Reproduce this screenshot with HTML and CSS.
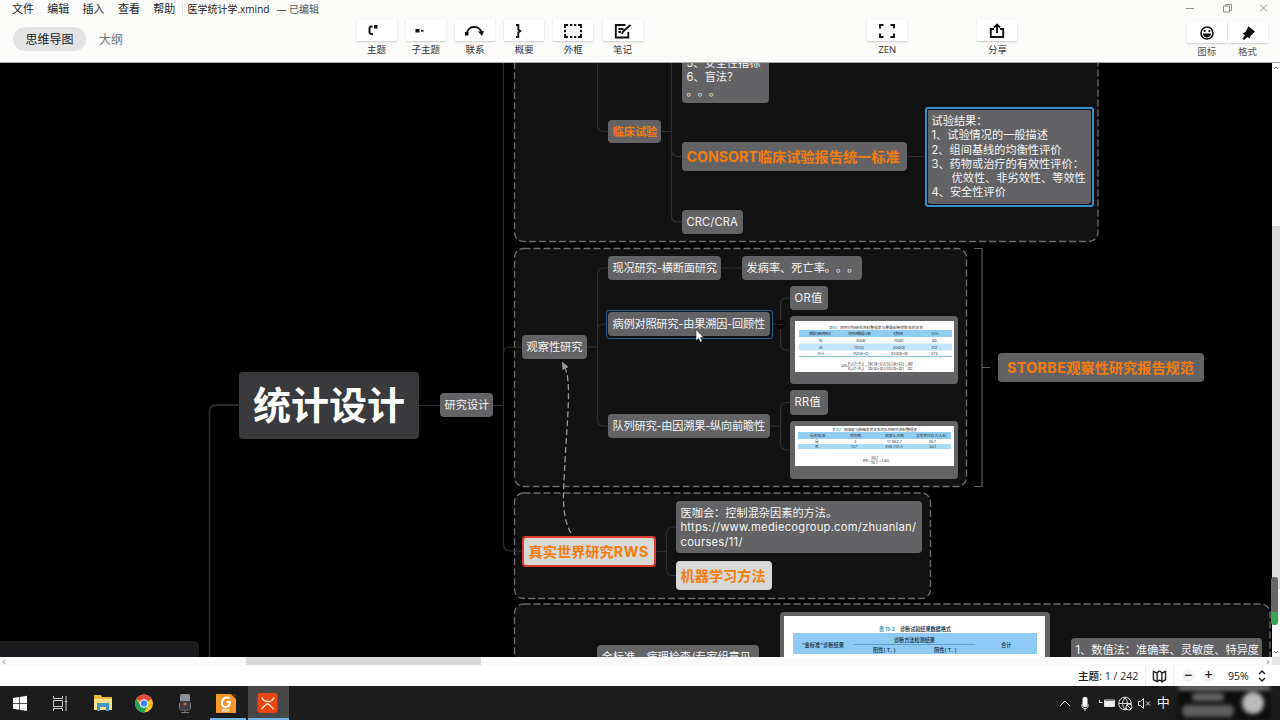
FILE: index.html
```html
<!DOCTYPE html>
<html lang="zh-CN">
<head>
<meta charset="utf-8">
<title>医学统计学.xmind</title>
<link rel="stylesheet" href="styles.css">
</head>
<body>
<div class="app">
  <header class="header">
    <div class="left">
      <nav class="menu"><span>文件</span><span>编辑</span><span>插入</span><span>查看</span><span>帮助</span><span class="doc">医学统计学.xmind</span><span class="saved">— 已编辑</span></nav>
      <div class="tabs"><span class="tab active">思维导图</span><span class="tab">大纲</span></div>
    </div>
    <div class="tools">
      <div class="tool"><div class="btn"><svg viewBox="0 0 40 22"><path d="M15.500 6.500h-1q-2 0-2 2v3.500q0 2 2 2H16" class="s2"/><rect x="17" y="5" width="3.500" height="3.500"/></svg></div><label>主题</label></div>
      <div class="tool"><div class="btn"><svg viewBox="0 0 40 22"><rect x="9.500" y="9" width="4" height="3.500"/><rect x="15" y="10" width="2.500" height="1.600"/></svg></div><label>子主题</label></div>
      <div class="tool"><div class="btn"><svg viewBox="0 0 40 22"><path d="M12 14C12 5 25 5 26.500 12.500" class="s2"/><path d="M23 11.500l6-.5-2 5z"/><rect x="10" y="12" width="3.500" height="3.500"/></svg></div><label>联系</label></div>
      <div class="tool"><div class="btn"><svg viewBox="0 0 40 22"><path d="M12 5h2.300v4.500l2 1.500-2 1.500V17H12" class="s2"/></svg></div><label>概要</label></div>
      <div class="tool"><div class="btn"><svg viewBox="0 0 40 22"><path d="M12 8V5h3M25 5h3v3M28 14v3h-3M15 17h-3v-3M17 5h2.300M21 5h2.300M17 17h2.300M21 17h2.300M12 9.800v2.500M28 9.800v2.500" class="s2"/></svg></div><label>外框</label></div>
      <div class="tool"><div class="btn"><svg viewBox="0 0 40 22"><path d="M22.500 5H12.800v12.500h12.500V12M15.500 9h5M15.500 12h2.500M19 14l1-2.500 7.500-6.500" class="s2"/></svg></div><label>笔记</label></div>
      <div class="tool zen"><div class="btn"><svg viewBox="0 0 40 22"><path d="M13 8.500V5h3.500M23.500 5H27v3.500M27 13.500V17h-3.500M16.500 17H13v-3.500" class="s2"/></svg></div><label>ZEN</label></div>
      <div class="tool share"><div class="btn"><svg viewBox="0 0 40 22"><path d="M17 9h-3.200v8h12.400V9H23M20 13V5M17 7.500l3-3 3 3" class="s2"/></svg></div><label>分享</label></div>
    </div>
    <div class="right">
      <svg class="winctl" viewBox="0 0 100 20"><path d="M6 8.500h8M43.500 6h6v6h-6zM45.500 6V4.500h6v6h-2M80 4.500l7 7M87 4.500l-7 7"/></svg>
      <div class="pair">
        <div class="ptool"><div class="btn"><svg viewBox="0 0 40 22"><circle cx="20" cy="11" r="6" class="s15"/><rect x="16.800" y="8" width="1.800" height="2"/><rect x="21.500" y="8" width="1.800" height="2"/><path d="M16 11.500h8q-.5 4-4 4t-4-4"/></svg></div><label>图标</label></div>
        <div class="ptool"><div class="btn"><svg viewBox="0 0 40 22"><path d="M20.500 4.200l6.500 5.300-4.500 4.500-1 2.500-2-1.500-3.500 3-1.500-1.500 2.500-3-2.500-2 3-1.500z"/></svg></div><label>格式</label></div>
      </div>
    </div>
  </header>

  <main class="stage">
    <div class="canvas">
      <div class="board">
        <svg class="links" viewBox="0 0 1272 660">
          <g class="bound">
            <rect x="514.500" y="20" width="583.500" height="221.500" rx="9"/>
            <rect x="514.500" y="248.500" width="452" height="238" rx="9"/>
            <rect x="514.500" y="493" width="416" height="105.500" rx="9"/>
            <rect x="514.500" y="604" width="755.500" height="90" rx="9"/>
          </g>
          <g class="line">
            <path d="M209.500 660V412q0-7 7-7H239" class="thick"/>
            <path d="M419 405.500h21M493 405.500h10.500M503.500 60V544q0 7 7 7H522M503.500 353q0-6 6-6H522"/>
            <path d="M587 347h10.500M597.500 60V125q0 6.500 6.500 6.500h4M661 131.500h10.500M671.500 60V216q0 6 6 6h5M671.500 150q0 6.500 6.500 6.500h4M907 156.500h20"/>
            <path d="M608 268h-4q-6.500 0-6.500 6.500V419.500q0 6.500 6.500 6.500h4M597.500 330q0-6 6.500-6h4M721 268h21"/>
            <path d="M770 324h10.500M791 298h-4q-6.500 0-6.500 6.500V343q0 7 6.500 7h4"/>
            <path d="M770 426h10.500M791 402.500h-4q-6.500 0-6.500 6.500V443q0 7 6.500 7h4"/>
            <path d="M656 551.500h10M677 527h-4q-6.500 0-6.500 6.500V569q0 6.500 6.500 6.500h4"/>
          </g>
          <path class="brace" d="M974 248.500h8V486.500h-8M982 367.500h8"/>
          <path class="relation" d="M571 533C560 515 564 485 565 462C567 420 572 380 564.500 367"/>
          <path d="M562 361.500l6.500 5.500-6 3z" fill="#999"/>
          <circle cx="780.500" cy="324.500" r="4.500" fill="#050505"/><path d="M778 324.500h5" stroke="#333"/>
        </svg>

        <div class="node root">统计设计</div>
        <div class="node n-design">研究设计</div>
        <div class="node n-list">5、安全性指标<br>6、盲法？<br>。。。</div>
        <div class="node n-trial hot">临床试验</div>
        <div class="node n-consort hot big"><span class="latin">CONSORT</span>临床试验报告统一标准</div>
        <div class="node n-crc"><span>CRC/CRA</span></div>
        <div class="node n-result picked">试验结果：<br>1、试验情况的一般描述<br>2、组间基线的均衡性评价<br>3、药物或治疗的有效性评价：<br><span class="indent">优效性、非劣效性、等效性</span><br>4、安全性评价</div>
        <div class="node n-obs">观察性研究</div>
        <div class="node n-cross">现况研究-横断面研究</div>
        <div class="node n-rate">发病率、死亡率。。。</div>
        <div class="node n-case picked soft">病例对照研究-由果溯因-回顾性</div>
        <div class="node n-or">OR值</div>
        <div class="node n-cohort">队列研究-由因溯果-纵向前瞻性</div>
        <div class="node n-rr">RR值</div>
        <div class="node n-storbe hot big"><span class="latin">STORBE</span>观察性研究报告规范</div>
        <div class="node n-url">医咖会：控制混杂因素的方法。<br><span class="link">https://www.mediecogroup.com/zhuanlan/<br>courses/11/</span></div>
        <div class="node n-rws hot big pale">真实世界研究<span class="latin">RWS</span></div>
        <div class="node n-ml hot big pale">机器学习方法</div>
        <div class="node n-gold">金标准、病理检查/专家组意见</div>
        <div class="node n-num">1、数值法：准确率、灵敏度、特异度</div>

        <div class="node n-img1"><svg class="pic" viewBox="0 0 159 51">
          <rect width="159" height="51" fill="#fff"/>
          <rect x="4" y="9" width="153" height="7" fill="#8fcdf3"/><rect x="4" y="22.500" width="153" height="7" fill="#c3e6fa"/><path d="M4 35.500h153" stroke="#5aa9cf" stroke-width=".7"/>
          <g class="tiny"><text x="34" y="7.700" textLength="8" class="blue">表 4-3</text><text x="45" y="7.700" textLength="83">病例对照研究资料整理表与暴露和疾病联系的关系</text>
          <text x="14" y="14" textLength="22">暴露与疾病情况</text><text x="53" y="14" textLength="23">病例组暴露人数</text><text x="98" y="14" textLength="10">对照组</text><text x="136" y="14">合计</text>
          <text x="24" y="20.500">有</text><text x="61" y="20.500">40(a)</text><text x="99" y="20.500">70(b)</text><text x="137" y="20.500">80</text>
          <text x="24" y="27.500">无</text><text x="59" y="27.500">112(c)</text><text x="98" y="27.500">200(d)</text><text x="136" y="27.500">312</text>
          <text x="22" y="34">合计</text><text x="58" y="34">152(a+c)</text><text x="96" y="34">220(b+d)</text><text x="136" y="34">372</text>
          <text x="46" y="46">OR=</text><text x="53" y="44" textLength="16">P₁/(1−P₁)</text><text x="53" y="48.500" textLength="16">P₀/(1−P₀)</text><text x="70" y="46">=</text><text x="73" y="44" textLength="36">[a/(a+c)]/[c/(a+c)]</text><text x="73" y="48.500" textLength="36">[b/(b+d)]/[d/(b+d)]</text><text x="110" y="46">=</text><text x="113" y="44">ad</text><text x="113" y="48.500">bc</text></g>
          <path d="M53 44.800h16M73 44.800h36M113 44.800h4" stroke="#777" stroke-width=".4"/>
        </svg></div>
        <div class="node n-img2"><svg class="pic" viewBox="0 0 159 40">
          <rect width="159" height="40" fill="#fff"/>
          <rect x="3" y="6" width="153" height="7" fill="#8fcdf3"/><rect x="3" y="18" width="153" height="5" fill="#a9dbf7"/>
          <g class="tiny"><text x="37" y="4.700" textLength="9" class="blue">表 4-2</text><text x="49" y="4.700" textLength="73">吸烟史与肺癌发病关系的队列研究资料整理表</text>
          <text x="15" y="11">是否吸烟</text><text x="55" y="11">病例数</text><text x="90" y="11">观察人年数</text><text x="121" y="11" textLength="31">发病率(1/10 万人年)</text>
          <text x="20" y="17">是</text><text x="59" y="17">3</text><text x="92" y="17">17 862.7</text><text x="134" y="17">16.7</text>
          <text x="20" y="22">否</text><text x="56" y="22">137</text><text x="90" y="22">448 761.3</text><text x="134" y="22">30.1</text>
          <text x="68" y="35.500">RR=</text><text x="76" y="33">30.1</text><text x="76" y="37.800">16.7</text><text x="84" y="35.500">=1.80</text></g><path d="M76 34h7" stroke="#555" stroke-width=".5"/>
        </svg></div>
        <div class="node n-img3"><svg class="pic" viewBox="0 0 261 60">
          <rect width="261" height="60" fill="#fff"/><rect x="9" y="17" width="244" height="21" fill="#8dcbf6"/><path d="M70 28.500h121" stroke="#4c8eb5" stroke-width=".7"/>
          <g class="mid"><text x="95" y="14.500" textLength="16" class="blue">表 15-2</text><text x="116" y="14.500" textLength="51">诊断试验结果数据格式</text><text x="18" y="30.500" textLength="42">“金标准”诊断结果</text><text x="110" y="25.500" textLength="41">诊断方法检测结果</text><text x="89" y="35.500">阳性( T₊ )</text><text x="150" y="35.500">阴性( T₋ )</text><text x="217" y="30.500">合计</text></g>
        </svg></div>
        <div class="node n-next"></div>
        <svg class="cursor" viewBox="0 0 10 14"><path d="M1 .5v11l2.500-2.200 1.800 3.800 1.900-.9-1.800-3.600h3.300z"/></svg>
      </div>
    </div>
    <div class="vscroll"><span class="thumb"></span><svg class="arrows up" viewBox="0 0 8 8"><path d="M2 5l2-2 2 2"/></svg><svg class="arrows down" viewBox="0 0 8 8"><path d="M2 3l2 2 2-2"/></svg><span class="meter"></span></div>
  </main>
  <div class="hscroll"><span class="harrow">‹</span><span class="hthumb"></span><span class="harrow">›</span><span class="corner"></span></div>

  <footer class="status">
    <span class="count">主题: 1 / 242</span>
    <svg class="map" viewBox="0 0 29 20"><path d="M8 5l4 2v9l-4-2zM12 16c1.500-2 3.500-2 5 0V7c-1.500-3-3.500-3-5 0M17 7l4-2v9l-4 2"/></svg>
    <span class="round">−</span><span class="round">+</span><span class="zoom">95%</span>
    <svg class="step" viewBox="0 0 10 16"><path d="M2 6l3-3 3 3M2 10l3 3 3-3"/></svg>
  </footer>

  <div class="taskbar">
    <div class="slot"><svg viewBox="0 0 40 34"><path fill="#fff" d="M13 12l6-1v6h-6zM19.700 10.900l7.300-1.200V17h-7.300zM13 17.700h6v6l-6-1zM19.700 17.700H27V25l-7.300-1.200z"/></svg></div>
    <div class="slot"><svg viewBox="0 0 40 34" class="ol"><path d="M12.500 10v2.500h9V10M12.500 14.500h9v6h-9zM12.500 25v-2.500h9V25M25 10v15M23.800 15.500h2.400"/></svg></div>
    <div class="slot"><svg viewBox="0 0 40 34"><path fill="#efb73e" d="M11 9h7l1 2h10v12H11z"/><path fill="#ffe08a" d="M11 13h18v11H11z"/><path fill="#4497c4" d="M14 17h12v8h-3v-4h-6v4h-3z"/></svg></div>
    <div class="slot"><svg viewBox="0 0 40 34"><circle cx="20" cy="17.500" r="9" fill="#fbc116"/><path fill="#dd4b3c" d="M20 17.500L12.200 13A9 9 0 0 1 27.800 13z"/><path fill="#22a05a" d="M12.200 13A9 9 0 0 0 20 26.500l3.500-6-7-1z"/><circle cx="20" cy="17.500" r="4.300" fill="#fff"/><circle cx="20" cy="17.500" r="3.300" fill="#4286ef"/></svg></div>
    <div class="slot"><svg viewBox="0 0 40 34"><rect x="15" y="8" width="10" height="13" rx="1.500" fill="#8c9098"/><path d="M15 15v6q0 2 2 2h6q2 0 2-2v-6z" fill="#3c3e44"/><path d="M14.500 17v5q0 2 2 2h7q2 0 2-2v-5M20 24v2.500M16 26.500h8" stroke="#777" fill="none"/><circle cx="20" cy="18" r="1.500" fill="#e0572d"/></svg></div>
    <div class="slot open"><svg viewBox="0 0 40 34"><path fill="#f4972c" d="M10 8h15l5 5v14H10z"/><path fill="#5a3710" d="M26 8l4 4V8z"/><path d="M23.500 12q-6-2-7.500 4-.5 5.500 4 5 4-1 4-5h-3.500" fill="none" stroke="#fff" stroke-width="2"/><text x="16" y="26.300" class="pdf">PDF</text></svg></div>
    <div class="slot open current"><svg viewBox="0 0 40 34"><rect x="9.500" y="7" width="20" height="20" rx="3" fill="#eb4610"/><path d="M14 11.500q1 3.500 5.500 4t6.500-4M13.500 23l5-5h2l5 5" stroke="#ffe8dc" stroke-width="1.300" fill="none"/></svg></div>
    <svg class="tray" viewBox="0 0 107 34"><g fill="none" stroke="#ddd"><path d="M10 20l5-5 5 5"/><path d="M32 18v3q3 3.500 6 0v-3M35 22v3"/><path d="M49.500 14v2.500h3M54.500 14h10v6.500h-10z"/><circle cx="75" cy="17.500" r="6.300"/><path d="M69 17.500h12M75 11.500q-5 6 0 12M75 11.500q5 6 0 12"/><circle cx="79" cy="21" r="3" fill="#1c1c1c"/><path d="M77 19l4 4M88.500 15.500h2l3-3v10l-3-3h-2zM96 15.500l4 4M100 15.500l-4 4"/></g><rect x="32.500" y="11" width="5" height="10" rx="2" fill="#fff"/><rect x="55" y="15" width="9" height="5" fill="#eee"/></svg>
    <span class="ime">中</span>
    <div class="haze"><i class="h1"></i><i class="h2"></i><i class="h3"></i><i class="h4"></i></div>
  </div>
</div>
</body>
</html>
```
FILE: styles.css
```css
*{box-sizing:border-box}
body{margin:0;background:#000;font-family:"Open Sans","Noto Sans CJK SC",sans-serif;color:#222}
svg{display:block}
.app{width:1280px;height:720px;display:flex;flex-direction:column;overflow:hidden}
/* header */
.header{height:63px;flex:none;display:flex;background:#fbfbfa;border-bottom:1px solid #aaa}
.left{width:352px}
.menu{display:flex;height:18px;align-items:center;padding-left:12px;font-size:11px;line-height:18px;white-space:nowrap}
.menu span{width:35.300px}
.menu .doc{width:auto;border-left:1px solid #e2e2e2;padding-left:4px;margin-left:-6px;font-size:10px;line-height:12px}
.menu .saved{width:auto;margin-left:7px;font-size:10px;color:#555}
.tabs{display:flex;gap:13px;padding:9px 0 0 13px;font-size:12px}
.tab{height:24px;line-height:25px;color:#777}
.active{width:73px;text-align:center;border-radius:12px;background:#e3e3e3;color:#222}
.tools{display:flex;width:828px;padding-top:20px}
.tool{width:49.200px;flex:none;display:flex;flex-direction:column;align-items:center}
.tool label,.ptool label{font-size:9.500px;line-height:12px;margin-top:3px;color:#333}
.zen{margin-left:215.500px}
.share{margin-left:61px}
.btn{width:40px;height:21px;background:#fff;box-shadow:0 1px 2px #ccc;border-radius:1px}
.btn svg{width:40px;height:22px;fill:#111}
.btn .s2{fill:none;stroke:#111;stroke-width:1.900}
.btn .s15{fill:none;stroke:#111;stroke-width:1.600}
.right{width:100px}
.winctl{width:100px;height:20px;fill:none;stroke:#888;stroke-width:.9}
.pair{display:flex;padding:2px 0 0 6.500px}
.ptool{display:flex;flex-direction:column;align-items:center;width:40.700px}
.ptool label{color:#555}
/* mind map */
.stage{flex:1;display:flex;min-height:0}
.canvas{width:1272px;position:relative;overflow:hidden;background:#000}
.board{position:absolute;left:0;top:-63px;width:1272px;height:660px;font-family:Inter,"Noto Sans CJK SC",sans-serif;text-spacing-trim:space-all}
.links{position:absolute;left:0;top:0;width:1272px;height:660px}
.bound rect{fill:#121212;stroke:#6c6c6c;stroke-width:1.300;stroke-dasharray:7 3}
.line path{fill:none;stroke:#303032;stroke-width:1.200}
.line .thick{stroke-width:1.800;stroke:#29292b}
.brace{fill:none;stroke:#5a5a5c;stroke-width:1.200}
.relation{fill:none;stroke:#999;stroke-width:1.300;stroke-dasharray:6 3}
.node{position:absolute;background:#636365;color:#f4f4f4;border-radius:4px;padding:5px 0 5px 4.500px;font-size:11.200px;line-height:14.300px;white-space:nowrap}
.hot{color:#f57c0b;font-weight:700}
.big{font-size:14.200px;line-height:19px}
.pale{background:#d8d8d7}
.picked::after{content:"";position:absolute;inset:-2.500px;border:2px solid #3c8fc4;border-radius:3px;box-shadow:inset 0 0 0 1px #07101c}
.soft::after{border:1px solid #24618c}
.root{left:239px;top:372px;width:180px;height:67px;background:#3a3a3c;color:#fff;font-size:38px;line-height:66px;font-weight:700;padding:0 0 0 14px}
.n-design{left:440px;top:393px;width:53px;height:24px}
.n-list{left:682px;top:51px;width:87px;height:52px}
.n-trial{left:608px;top:120px;width:53px;height:23px}
.n-consort{left:682px;top:142px;width:225px;height:29px}
.n-crc{left:682px;top:210px;width:61px;height:24px;letter-spacing:.1px}
.n-result{left:927px;top:109px;width:164px;height:95px}
.indent{padding-left:20px}
.n-obs{left:522px;top:335px;width:65px;height:24px}
.n-cross{left:608px;top:256px;width:113px;height:24px;letter-spacing:-.15px}
.n-rate{left:742px;top:256px;width:120px;height:24px}
.n-case{left:608px;top:312px;width:162px;height:24px;letter-spacing:-.22px}
.n-or{left:790px;top:286px;width:38px;height:24px;letter-spacing:.35px}
.n-cohort{left:608px;top:414px;width:162px;height:24px;letter-spacing:-.22px}
.n-rr{left:790px;top:390px;width:38px;height:25px;letter-spacing:.35px}
.n-storbe{left:998px;top:353px;width:206px;height:29px;padding-left:9px}
.n-storbe .latin{letter-spacing:.45px}
.n-url{left:676px;top:501px;width:246px;height:52px}
.link{letter-spacing:.25px}
.n-rws{left:522px;top:536px;width:134px;height:31px;border:2px solid #dc3b32;padding-top:4px}
.n-rws .latin{letter-spacing:.7px}
.n-ml{left:676px;top:561px;width:96px;height:29px}
.n-gold{left:597px;top:645px;width:162px;height:30px}
.n-num{left:1071px;top:638px;width:191px;height:30px}
.n-img1{left:790px;top:316px;width:168px;height:68px;padding:5px}
.n-img2{left:790px;top:421px;width:168px;height:58px;padding:5px}
.n-img3{left:780px;top:612px;width:270px;height:80px;padding:4px}
.n-img1 .pic{width:159px;height:51px}
.n-img2 .pic{width:159px;height:40px}
.n-img3 .pic{width:261px;height:60px}
.n-next{left:-10px;top:641px;width:209px;height:40px;background:#1b1b1d}
.tiny{font-size:3.800px;fill:#333}
.mid{font-size:5.200px;font-weight:500;fill:#123}
.blue{fill:#1686c4}
.cursor{position:absolute;left:695px;top:329px;width:10px;height:14px;fill:#fff;stroke:#222;stroke-width:.5}
/* scrollbars */
.vscroll{width:8px;background:#fafafa;position:relative;padding-top:163px}
.thumb{display:block;height:363px;background:#dcdcdc}
.arrows{position:absolute;left:0;width:8px;height:8px;fill:none;stroke:#999}
.up{top:1px}
.down{bottom:1px}
.meter{position:absolute;left:-1px;top:514px;width:7px;height:48px;border-radius:3px;background:linear-gradient(#666 72%,#35a552 72%)}
.hscroll{height:8px;flex:none;display:flex;align-items:center;background:#fafafa}
.harrow{width:8px;text-align:center;font-size:11px;line-height:6px;color:#888}
.hthumb{width:235px;height:8px;margin:0 783px 0 238px;background:#d9d9d9}
.corner{width:8px;height:8px;background:#e7e7e7}
/* status */
.status{height:21px;flex:none;display:flex;align-items:center;background:#fff;font-size:10.600px;font-weight:600;padding-left:1078px;white-space:nowrap}
.count{width:67px;font-weight:500}
.map{width:29px;height:20px;fill:none;stroke:#222;stroke-width:1.500;border-left:1px solid #eee;border-right:1px solid #eee}
.round{width:13px;height:13px;border-radius:7px;background:#f2f2f2;text-align:center;font-size:14px;line-height:12px;margin-left:7.500px}
.zoom{margin-left:13px;width:22px;font-weight:500;font-size:10.500px}
.step{width:10px;height:16px;margin-left:7px;fill:none;stroke:#222;stroke-width:1.500}
/* taskbar */
.taskbar{height:34px;flex:none;display:flex;background:#1c1c1c;overflow:hidden}
.slot{width:41.300px;height:34px;flex:none}
.slot svg{width:40px;height:34px}
.open{border-bottom:2px solid #76b2e2;width:36px;margin:0 1.300px 0 4px}
.open svg{margin-left:-4px}
.current{background:#484848;width:41px;margin:0}
.current svg{margin-left:0}
.ol{fill:none;stroke:#ccc;stroke-width:1}
.pdf{font-size:4px;fill:#fff;font-weight:700}
.tray{width:107px;height:34px;margin-left:761px;flex:none}
.ime{width:21px;flex:none;color:#eee;font-size:13px;line-height:33px}
.haze{width:92px;flex:none;height:34px;position:relative;overflow:hidden;filter:blur(2px);background:#0d0d0d}
.haze i{position:absolute;border-radius:5px;background:#888}
.haze .h1{left:0;top:-2px;width:94px;height:6px}
.haze .h2{left:14px;top:7px;width:32px;height:8px;background:#666}
.haze .h3{left:4px;top:19px;width:52px;height:12px;background:#5f5f5f}
.haze .h4{left:64px;top:6px;width:22px;height:22px;border-radius:11px;background:#bbb}
```
